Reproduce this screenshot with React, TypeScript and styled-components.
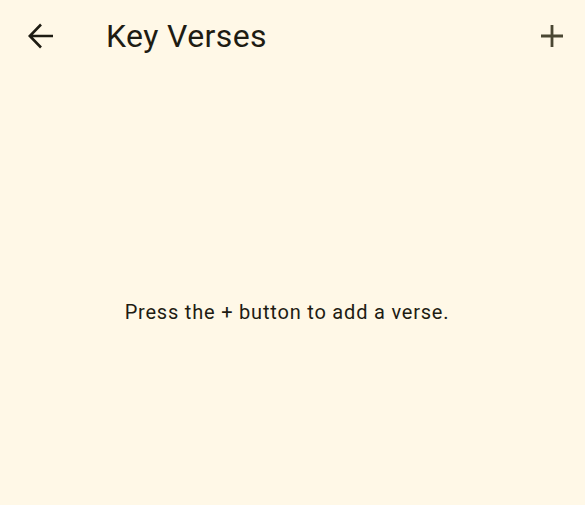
import React from "react";
import styled, { createGlobalStyle } from "styled-components";

const GlobalStyle = createGlobalStyle`
  html, body {
    margin: 0;
    padding: 0;
    background: #fff8e7;
  }
  body {
    font-family: Roboto, "Noto Sans", sans-serif;
    color: #1e1c13;
  }
`;

const Page = styled.div`
  width: 585px;
  height: 505px;
  display: flex;
  flex-direction: column;
  background: #fff8e7;
`;

const AppBar = styled.header`
  height: 72px;
  display: flex;
  align-items: center;
  padding: 0 9px 0 17px;
`;

const IconButton = styled.button<{ $tone?: string }>`
  width: 48px;
  height: 48px;
  display: flex;
  align-items: center;
  justify-content: center;
  border: none;
  background: transparent;
  padding: 0;
  color: ${(p) => p.$tone ?? "#1e1c13"};
  cursor: pointer;
`;

const Title = styled.h1`
  flex: 1;
  margin: 0 0 0 41px;
  font-size: 32px;
  font-weight: 400;
  letter-spacing: 0.4px;
  line-height: 38px;
`;

const Body = styled.main`
  flex: 1;
  display: flex;
  justify-content: center;
  padding-top: 226px;
  padding-right: 11px;
`;

const EmptyText = styled.p`
  margin: 0;
  font-size: 20px;
  line-height: 28px;
  letter-spacing: 0.8px;
`;

export default function App() {
  return (
    <>
      <GlobalStyle />
      <Page>
        <AppBar>
          <IconButton aria-label="Back">
            <svg width="26" height="26" viewBox="0 0 26 26" fill="none" stroke="currentColor" strokeWidth="2.6">
              <path d="M25 13H2M13 1.5L1.8 13L13 24.5" />
            </svg>
          </IconButton>
          <Title>Key Verses</Title>
          <IconButton aria-label="Add verse" $tone="#4a4733">
            <svg width="22" height="22" viewBox="0 0 22 22" fill="none" stroke="currentColor" strokeWidth="2.8">
              <path d="M11 0V22M0 11H22" />
            </svg>
          </IconButton>
        </AppBar>
        <Body>
          <EmptyText>Press the + button to add a verse.</EmptyText>
        </Body>
      </Page>
    </>
  );
}
